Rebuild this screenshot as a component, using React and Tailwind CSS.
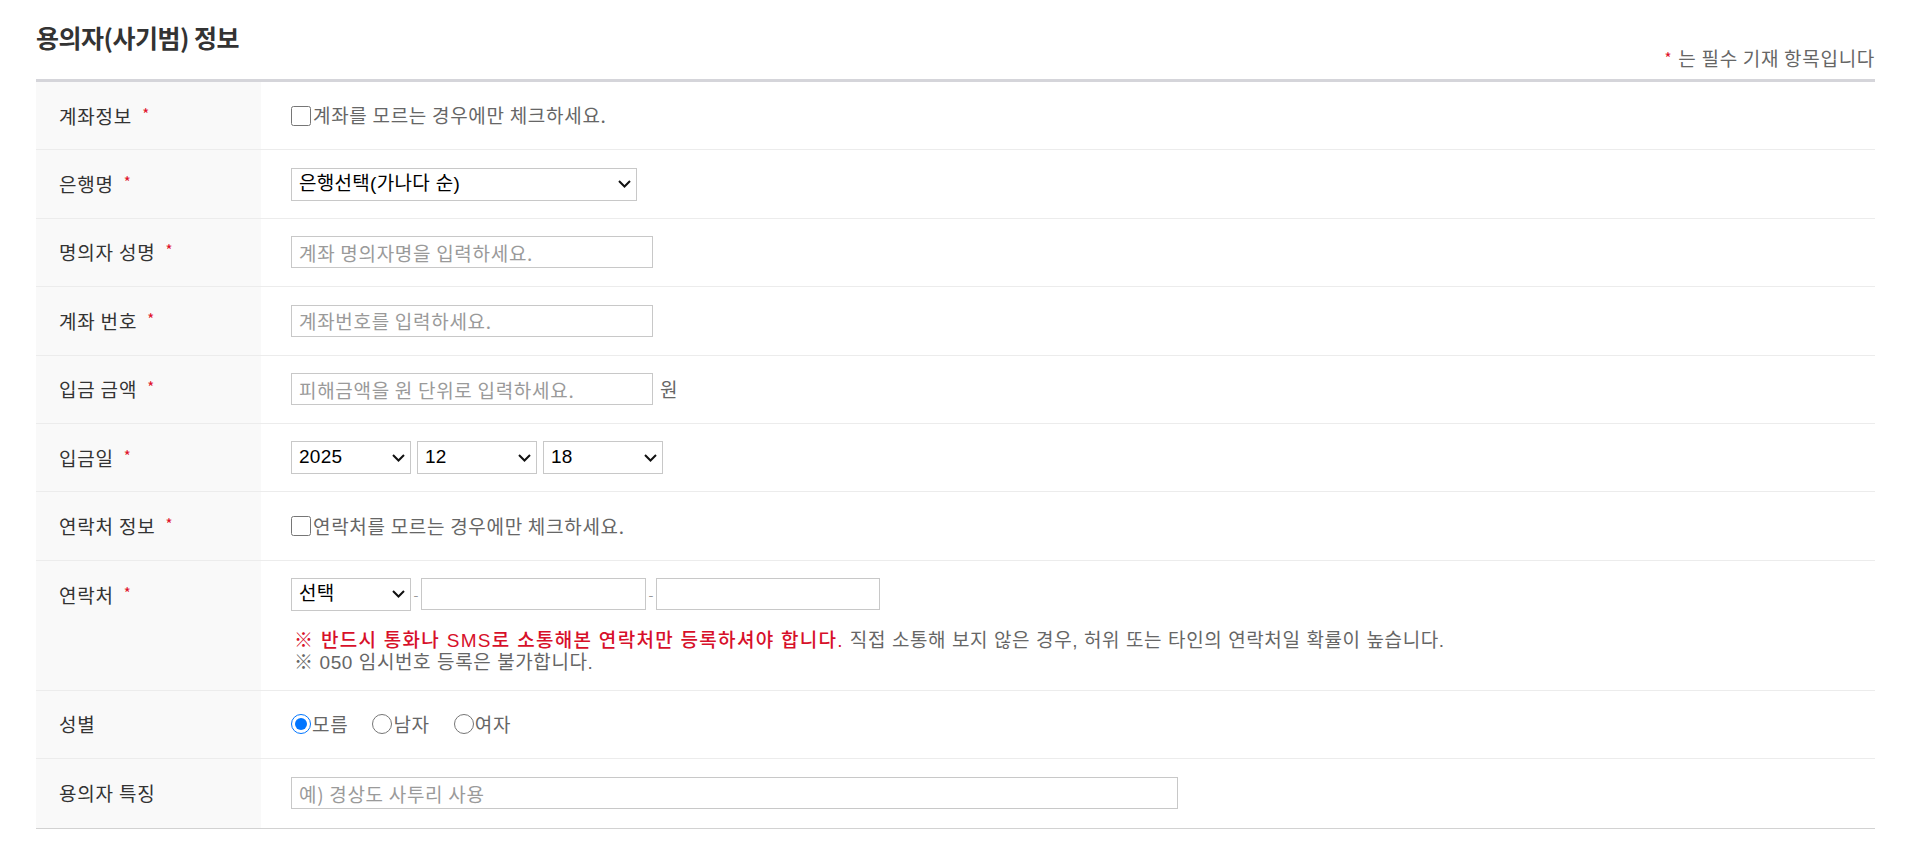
import React from 'react';

const Star = () => <span className="ml-[10px] text-[15px] text-[#e0102a] relative -top-[2px]">*</span>;

const Chevron = () => (
  <svg className="pointer-events-none absolute right-[6px] top-1/2 -translate-y-1/2" width="13" height="8" viewBox="0 0 13 8" fill="none">
    <path d="M1 1l5.5 5.5L12 1" stroke="#111" strokeWidth="2" />
  </svg>
);

const Select = ({ value, width }) => (
  <div className={`relative ${width}`}>
    <select
      defaultValue={value}
      className="w-full h-[33px] appearance-none bg-white border border-[#c8c8c8] pl-[7px] pr-6 text-[19px] tracking-[0.3px] text-black font-['Liberation_Sans','Noto_Sans_CJK_KR',sans-serif] outline-none"
    >
      <option>{value}</option>
    </select>
    <Chevron />
  </div>
);

const TextInput = ({ placeholder = '', width }) => (
  <input
    type="text"
    placeholder={placeholder}
    className={`${width} h-[32px] border border-[#c8c8c8] bg-white pl-[7px] text-[19px] tracking-[0.7px] text-[#333] placeholder:text-[#9a9a9a] outline-none`}
  />
);

const Row = ({ label, required, children, tall }) => (
  <div className={`flex border-b border-[#ececec] ${tall ? 'h-[130px]' : 'h-[68.4px]'}`}>
    <div className={`w-[225px] shrink-0 bg-[#f9f9f9] flex pl-[23px] text-[19px] tracking-[0.8px] leading-[24px] text-[#333] ${tall ? 'items-start pt-[22px]' : 'items-center'}`}>
      <span>{label}</span>
      {required && <Star />}
    </div>
    <div className={`flex-1 pl-[30px] ${tall ? 'flex flex-col pt-[17px]' : 'flex items-center'}`}>{children}</div>
  </div>
);

const Check = ({ text }) => (
  <label className="flex items-center text-[19px] tracking-[0.7px] text-[#666]">
    <input type="checkbox" className="w-5 h-5 mr-[2px] accent-[#0075ff]" />
    <span>{text}</span>
  </label>
);

const Radio = ({ text, checked }) => (
  <label className="flex items-center text-[19px] tracking-[0.7px] text-[#666] mr-[24px]">
    <input type="radio" name="gender" defaultChecked={checked} className="w-5 h-5 mr-[1px] accent-[#0075ff]" />
    <span>{text}</span>
  </label>
);

export default function App() {
  return (
    <div className="min-h-screen bg-white pl-[36px] pr-[34px] font-['Noto_Sans_CJK_KR','Liberation_Sans',sans-serif]">
      <div className="flex justify-between items-end pt-[19px]">
        <h2 className="text-[25px] leading-[36px] font-bold text-[#333] mb-[24px] tracking-[-0.5px]">용의자(사기범) 정보</h2>
        <p className="text-[19px] tracking-[0.7px] leading-[24px] text-[#666] mb-[7px]">
          <span className="text-[15px] text-[#e0102a] relative -top-[2px] mr-[6px]">*</span>는 필수 기재 항목입니다
        </p>
      </div>

      <div className="border-t-[3px] border-[#d5d5da] border-b border-b-[#d2d2d2]">
        <Row label="계좌정보" required>
          <Check text="계좌를 모르는 경우에만 체크하세요." />
        </Row>
        <Row label="은행명" required>
          <Select value="은행선택(가나다 순)" width="w-[346px]" />
        </Row>
        <Row label="명의자 성명" required>
          <TextInput placeholder="계좌 명의자명을 입력하세요." width="w-[362px]" />
        </Row>
        <Row label="계좌 번호" required>
          <TextInput placeholder="계좌번호를 입력하세요." width="w-[362px]" />
        </Row>
        <Row label="입금 금액" required>
          <TextInput placeholder="피해금액을 원 단위로 입력하세요." width="w-[362px]" />
          <span className="ml-[7px] text-[19px] text-[#666]">원</span>
        </Row>
        <Row label="입금일" required>
          <div className="flex gap-[6px]">
            <Select value="2025" width="w-[120px]" />
            <Select value="12" width="w-[120px]" />
            <Select value="18" width="w-[120px]" />
          </div>
        </Row>
        <Row label="연락처 정보" required>
          <Check text="연락처를 모르는 경우에만 체크하세요." />
        </Row>
        <Row label="연락처" required tall>
          <div className="flex items-center">
            <Select value="선택" width="w-[120px]" />
            <span className="w-[10px] text-center text-[14px] text-[#999]">-</span>
            <TextInput width="w-[225px]" />
            <span className="w-[10px] text-center text-[14px] text-[#999]">-</span>
            <TextInput width="w-[224px]" />
          </div>
          <div className="mt-[19px] text-[19px] tracking-[0.6px] leading-[22px] text-[#666] pl-[3px] font-['Liberation_Sans','Noto_Sans_CJK_KR',sans-serif]">
            <p>
              <span className="text-[#d7102a] font-medium tracking-[1.3px]">※ 반드시 통화나 SMS로 소통해본 연락처만 등록하셔야 합니다.</span>{' '}
              직접 소통해 보지 않은 경우, 허위 또는 타인의 연락처일 확률이 높습니다.
            </p>
            <p>※ 050 임시번호 등록은 불가합니다.</p>
          </div>
        </Row>
        <Row label="성별">
          <div className="flex items-center">
            <Radio text="모름" checked />
            <Radio text="남자" />
            <Radio text="여자" />
          </div>
        </Row>
        <div className="flex h-[68.4px]">
          <div className="w-[225px] shrink-0 bg-[#f9f9f9] flex items-center pl-[23px] text-[19px] tracking-[0.8px] text-[#333]">용의자 특징</div>
          <div className="flex-1 pl-[30px] flex items-center">
            <TextInput placeholder="예) 경상도 사투리 사용" width="w-[887px]" />
          </div>
        </div>
      </div>
    </div>
  );
}
